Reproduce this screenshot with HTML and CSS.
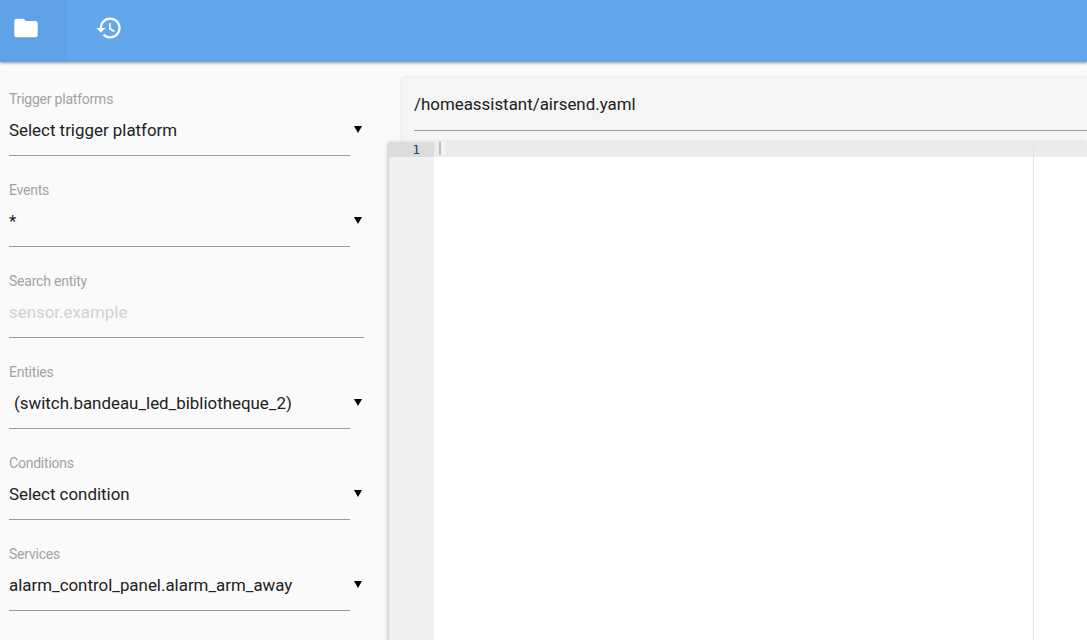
FILE: index.html
```html
<!DOCTYPE html>
<html lang="en">
<head>
<meta charset="utf-8">
<title>Configurator</title>
<link rel="stylesheet" href="styles.css">
</head>
<body>
<header class="topbar">
  <div class="tab tab-active">
    <svg class="tab-icon" viewBox="0 0 24 24"><path d="M10 4H4c-1.1 0-2 .9-2 2v12c0 1.100.9 2 2 2h16c1.100 0 2-.9 2-2V8c0-1.100-.9-2-2-2h-8l-2-2z"/></svg>
  </div>
  <div class="tab">
    <svg class="tab-icon" viewBox="0 0 24 24"><path d="M13 3c-4.970 0-9 4.030-9 9H1l3.890 3.890.07.140L9 12H6c0-3.870 3.130-7 7-7s7 3.130 7 7-3.130 7-7 7c-1.930 0-3.680-.79-4.940-2.060l-1.420 1.420C8.270 19.990 10.510 21 13 21c4.970 0 9-4.030 9-9s-4.030-9-9-9zm-1 5v5l4.280 2.540.72-1.210-3.500-2.080V8H12z"/></svg>
  </div>
</header>
<main class="layout">
  <aside class="sidebar">
    <div class="field">
      <div class="field-label">Trigger platforms</div>
      <div class="select"><span class="value">Select trigger platform</span><span class="caret"></span></div>
    </div>
    <div class="field">
      <div class="field-label">Events</div>
      <div class="select"><span class="value">*</span><span class="caret"></span></div>
    </div>
    <div class="field">
      <div class="field-label">Search entity</div>
      <div class="select select-input"><span class="value placeholder">sensor.example</span></div>
    </div>
    <div class="field">
      <div class="field-label">Entities</div>
      <div class="select"><span class="value value-indent">(switch.bandeau_led_bibliotheque_2)</span><span class="caret"></span></div>
    </div>
    <div class="field">
      <div class="field-label">Conditions</div>
      <div class="select"><span class="value">Select condition</span><span class="caret"></span></div>
    </div>
    <div class="field">
      <div class="field-label">Services</div>
      <div class="select"><span class="value">alarm_control_panel.alarm_arm_away</span><span class="caret"></span></div>
    </div>
  </aside>
  <section class="workspace">
    <div class="file-card">
      <div class="file-path">/homeassistant/airsend.yaml</div>
    </div>
    <div class="editor">
      <div class="gutter"><div class="gutter-line">1</div></div>
      <div class="code">
        <div class="active-line"><span class="fold"></span></div>
        <div class="print-margin"></div>
      </div>
    </div>
  </section>
</main>
</body>
</html>
```
FILE: styles.css
```css
* { box-sizing: border-box; }
html, body { height: 100%; }
body {
  margin: 0;
  height: 640px;
  overflow: hidden;
  background: #fafafa;
  font-family: Roboto, "Liberation Sans", sans-serif;
  color: #212121;
}
.topbar {
  height: 62px;
  display: flex;
  background: #62a7ec;
  box-shadow: 0 1px 3px rgba(0, 0, 0, 0.4);
  position: relative;
  z-index: 3;
}
.tab {
  width: 67px;
  height: 62px;
  display: flex;
  align-items: center;
  justify-content: center;
  padding-bottom: 7px;
}
.tab-active {
  background: #5ea1e4;
  padding-right: 15px;
  width: 67px;
}
.tab + .tab { width: 84px; }
.tab-icon { width: 28px; height: 28px; fill: #fff; display: block; }
.layout { display: flex; height: 578px; }
.sidebar {
  width: 388px;
  flex: none;
  padding: 29px 0 0 9px;
}
.field { height: 91px; width: 355px; }
.field-label {
  font-size: 14px;
  letter-spacing: -0.22px;
  line-height: 16px;
  color: #a3a3a3;
}
.select {
  display: flex;
  justify-content: space-between;
  height: 49px;
  width: 341px;
  padding-top: 13px;
  border-bottom: 1px solid #9a9a9a;
  position: relative;
}
.select-input { width: 355px; }
.value { font-size: 16.9px; line-height: 20px; color: #212121; }
.value-indent { padding-left: 5px; }
.placeholder { color: #d2d2d2; }
.caret {
  position: absolute;
  left: 345px;
  top: 19px;
  width: 0;
  height: 0;
  border-left: 4px solid transparent;
  border-right: 4px solid transparent;
  border-top: 7px solid #000;
}
.workspace {
  flex: 1;
  min-width: 0;
  position: relative;
  padding: 16px 0 0 14px;
}
.file-card {
  height: 78px;
  background: #f5f5f5;
  box-shadow: 0 0 4px rgba(0, 0, 0, 0.12);
  padding: 0 0 0 12px;
}
.file-path {
  height: 53px;
  padding-top: 15px;
  font-size: 16.9px;
  line-height: 22px;
  border-bottom: 1px solid #9a9a9a;
  color: #212121;
}
.editor {
  position: absolute;
  left: 1px;
  right: 0;
  top: 80px;
  bottom: 0;
  display: flex;
  background: #fff;
  box-shadow: -1px 1px 4px rgba(0, 0, 0, 0.25);
}
.gutter {
  width: 45px;
  flex: none;
  background: #f0f0f0;
  font-family: "DejaVu Sans Mono", monospace;
  font-size: 13px;
  color: #2c3e70;
}
.gutter-line {
  height: 15px;
  line-height: 15px;
  background: #dcdcdc;
  text-align: right;
  padding-right: 14px;
}
.code { flex: 1; position: relative; }
.active-line {
  height: 15px;
  background: #ececec;
  padding-left: 5px;
}
.fold {
  display: block;
  width: 7px;
  height: 13px;
  border-left: 2px solid #bdbdbd;
  background: #f7f2f2;
}
.print-margin {
  position: absolute;
  left: 599px;
  top: 0;
  bottom: 0;
  width: 1px;
  background: #e3e3e3;
}
```
